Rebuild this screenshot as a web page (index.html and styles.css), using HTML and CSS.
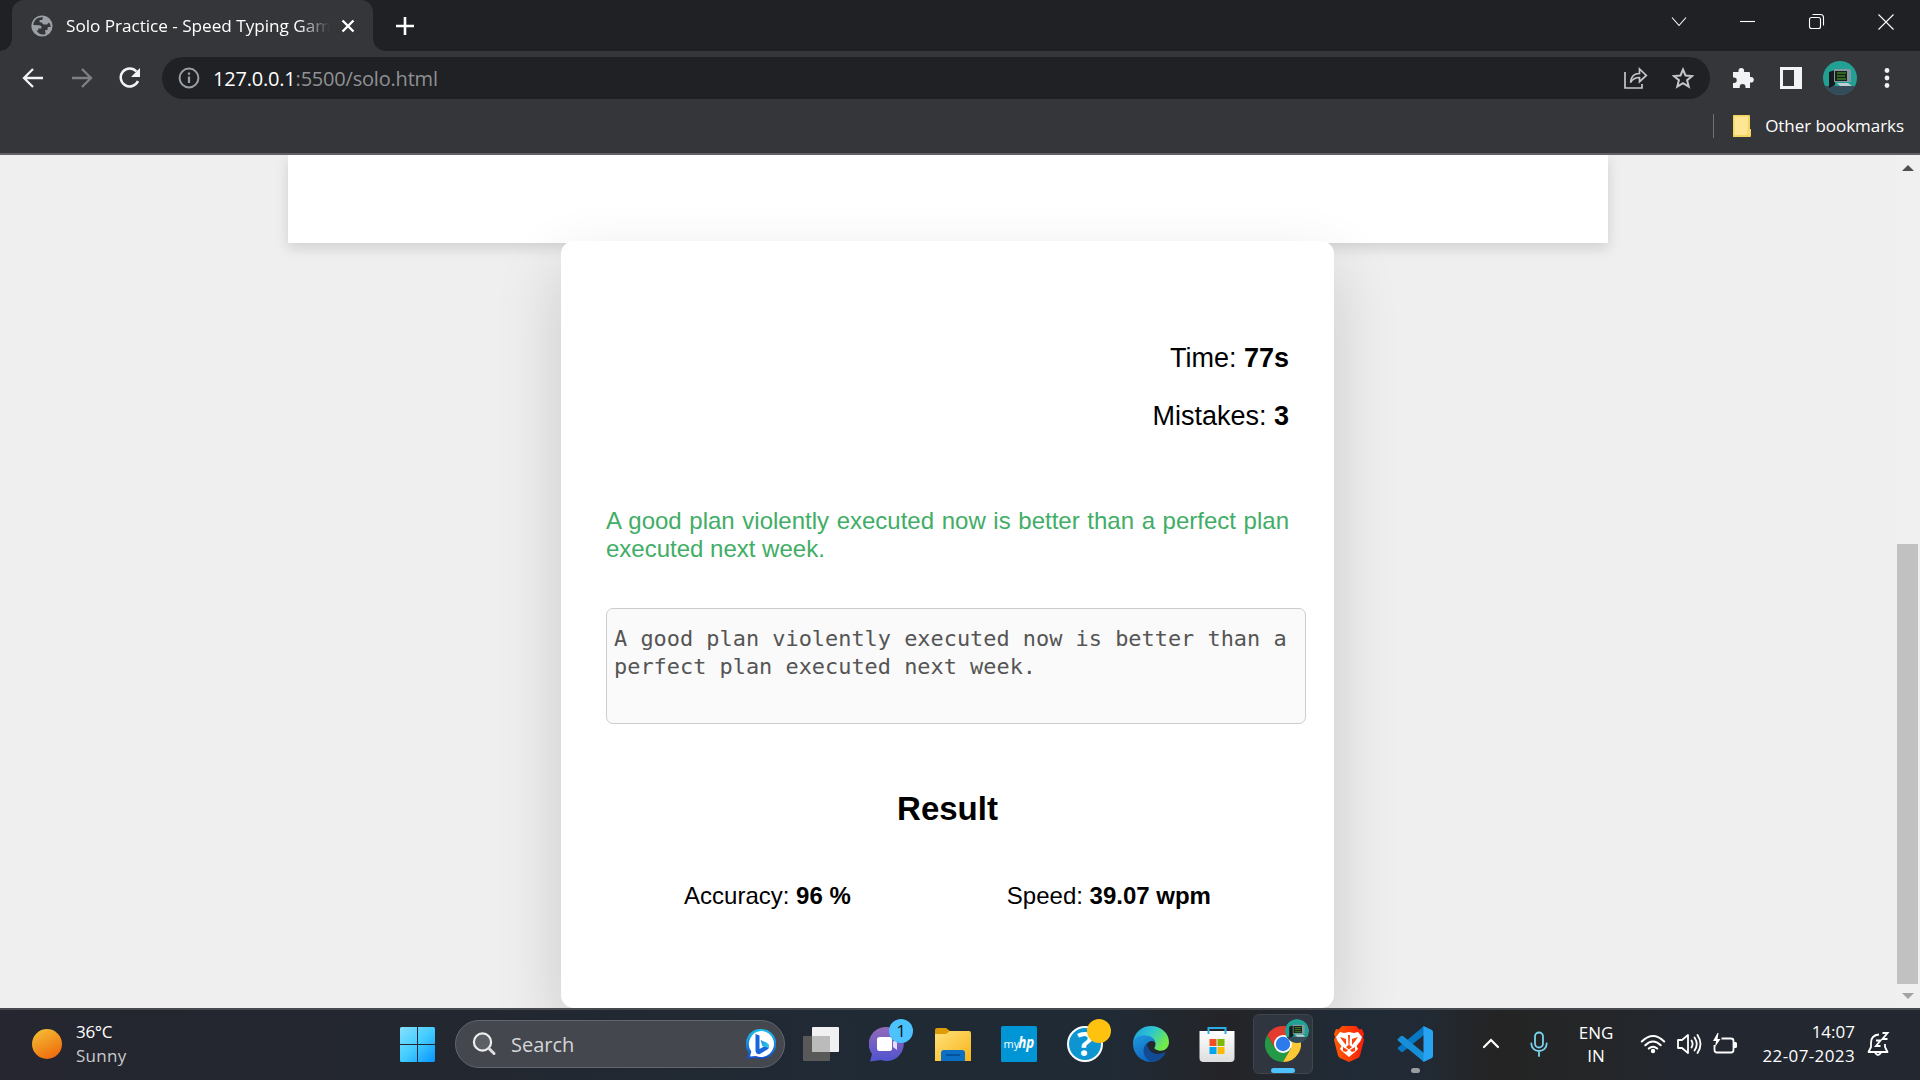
FILE: index.html
```html
<!DOCTYPE html>
<html lang="en">
<head>
<meta charset="utf-8">
<title>Solo Practice - Speed Typing Game</title>
<link rel="stylesheet" href="styles.css">
</head>
<body>
<div class="screen">
  <header class="browser">
    <div class="tabstrip">
      <div class="tab">
        <svg class="globe" width="22" height="22" viewBox="0 0 22 22"><circle cx="11" cy="11" r="10.6" fill="#9aa0a6"/><path d="M12 2.4C6.5 1.8 2.6 5.6 2.3 10l5.4.2c2.5 0 3 1.2 2.8 3.2H7.3v2.2H5.5c2 3.6 6 4.7 9 3.4l-.4-3.9h2.3l.4-3.2h2.9c-.2-1.8-.6-2.7-1.7-4.3l-2 1.9h-3.4L10.500 7.500 8.600 7.200V5.100h2.600z" fill="#35363a"/></svg>
        <span class="tab-title">Solo Practice - Speed Typing Gam</span>
        <svg class="tab-close" width="14" height="14" viewBox="0 0 14 14"><path d="M1.500 1.500l11 11M12.500 1.500l-11 11" stroke="#fff" stroke-width="2.400"/></svg>
      </div>
      <svg class="new-tab" width="18" height="18" viewBox="0 0 18 18"><path d="M9 0v18M0 9h18" stroke="#fff" stroke-width="2.600"/></svg>
      <div class="window-buttons">
        <svg width="18" height="18" viewBox="0 0 18 18"><path d="M2 4.500l7 8 7-8"/></svg>
        <svg width="18" height="18" viewBox="0 0 18 18"><path d="M1 8.500h15"/></svg>
        <svg width="18" height="18" viewBox="0 0 18 18"><rect x="1.500" y="4.500" width="11" height="11" rx="2"/><path d="M4.500 1.500h8q3 0 3 3v8"/></svg>
        <svg width="18" height="18" viewBox="0 0 18 18"><path d="M1.500 1.500l15 15M16.500 1.500l-15 15"/></svg>
      </div>
    </div>
    <div class="toolbar">
      <svg class="back" width="22" height="20" viewBox="0 0 22 20"><path d="M21 10H2M11 1L2 10l9 9" fill="none" stroke="#f1f3f4" stroke-width="2.300"/></svg>
      <svg class="forward" width="22" height="20" viewBox="0 0 22 20"><path d="M1 10h19M11 1l9 9-9 9" fill="none" stroke="#7f8084" stroke-width="2.300"/></svg>
      <svg class="reload" width="22" height="22" viewBox="0 0 22 22"><path d="M17.500 4.500A9 9 0 1 0 19 14" fill="none" stroke="#f1f3f4" stroke-width="2.500"/><path d="M21 1v9h-9z" fill="#f1f3f4"/></svg>
      <div class="address">
        <svg class="info" width="22" height="22" viewBox="0 0 22 22"><circle cx="11" cy="11" r="9.400" fill="none" stroke="#9aa0a6" stroke-width="2"/><path d="M11 9.500v6.500M11 5.600v2.200" stroke="#9aa0a6" stroke-width="2.200"/></svg>
        <span class="url"><span class="host">127.0.0.1</span><span class="path">:5500/solo.html</span></span>
        <svg class="share" width="24" height="22" viewBox="0 0 24 22"><path d="M1 5v16h17v-4M6.500 15.500C7 9 11 6.500 15.500 6.500V2l6.800 6.500-6.800 6.200v-4.200c-4 0-7 1.500-9 5z" fill="none" stroke="#c4c6c9" stroke-width="1.700"/></svg>
        <svg class="star" width="22" height="22" viewBox="0 0 22 22"><path d="M11 2.500l2.500 6 6.600.5-5 4.200 1.600 6.400L11 16.100l-5.700 3.500 1.600-6.400L1.900 9l6.600-.5z" fill="none" stroke="#c4c6c9" stroke-width="2"/></svg>
      </div>
      <svg class="puzzle" width="22" height="22" viewBox="0 0 22 22"><path d="M1 5h5.500V3.700a2.800 2.800 0 0 1 5.600 0V5H17q1 0 1 1v4h1a2.800 2.800 0 0 1 0 5.600h-1V21h-4.500v-1.200a2.900 2.900 0 0 0-5.800 0V21H1v-5h1a2.700 2.700 0 0 0 0-5.500H1z" fill="#f1f3f4"/></svg>
      <svg class="sidepanel" width="22" height="22" viewBox="0 0 22 22"><path d="M0 0h22v22H0zM3 3v16h11V3z" fill="#f1f3f4" fill-rule="evenodd"/></svg>
      <svg class="avatar" width="34" height="34" viewBox="0 0 34 34"><use href="#avatar-art"/></svg>
      <svg class="kebab" width="6" height="20" viewBox="0 0 6 20"><g fill="#f1f3f4"><circle cx="3" cy="2.500" r="2.400"/><circle cx="3" cy="10" r="2.400"/><circle cx="3" cy="17.500" r="2.400"/></g></svg>
    </div>
    <div class="bookmarks">
      <svg width="18" height="22" viewBox="0 0 18 22"><path d="M0 .5q0-.5.500-.5H16q1 0 1 1v13h1v7q0 1-1 1H0z" fill="#f5d45d"/><path d="M1.500 1.500h13.500v12.500l-1.500 6H1.500z" fill="#ffe694"/><path d="M14.500 15h2.500v5.500h-2.500z" fill="#f8dc75"/></svg>
      <span>Other bookmarks</span>
    </div>
  </header>

  <main class="viewport">
    <div class="page">
      <div class="panel"></div>
      <section class="card">
        <div class="metric">Time: <b>77s</b></div>
        <div class="metric">Mistakes: <b>3</b></div>
        <p class="quote">A good plan violently executed now is better than a perfect plan executed next week.</p>
        <div class="entry">A good plan violently executed now is better than a perfect plan executed next week.</div>
        <h3 class="result">Result</h3>
        <div class="stats"><div>Accuracy: <b>96 %</b></div><div>Speed: <b>39.07 wpm</b></div></div>
      </section>
    </div>
    <div class="scrollbar">
      <svg width="12" height="6" viewBox="0 0 12 6"><path d="M0 6l6-6 6 6z" fill="#505050"/></svg>
      <div class="thumb"></div>
      <svg width="12" height="6" viewBox="0 0 12 6"><path d="M0 0l6 6 6-6z" fill="#a3a3a3"/></svg>
    </div>
  </main>

  <footer class="taskbar">
    <div class="weather">
      <svg width="30" height="30" viewBox="0 0 30 30"><defs><linearGradient id="sun" x1=".2" y1="0" x2=".7" y2="1"><stop stop-color="#f4bd35"/><stop offset="1" stop-color="#f06a0c"/></linearGradient></defs><circle cx="15" cy="15" r="15" fill="url(#sun)"/></svg>
      <div class="weather-text"><span class="temp">36°C</span><span class="sky">Sunny</span></div>
    </div>
    <div class="app start"><svg width="35" height="35" viewBox="0 0 35 35"><defs><linearGradient id="win" x1="0" y1="0" x2="1" y2="1"><stop stop-color="#85e0ff"/><stop offset=".5" stop-color="#43ccff"/><stop offset="1" stop-color="#0794ff"/></linearGradient></defs><path d="M1.500 0H17v17H0V1.500Q0 0 1.500 0zM18 0h15.500Q35 0 35 1.500V17H18zM0 18h17v17H1.500Q0 35 0 33.500zM18 18h17v15.500q0 1.500-1.500 1.500H18z" fill="url(#win)"/></svg></div>
    <div class="search">
      <svg width="24" height="24" viewBox="0 0 24 24"><circle cx="10.500" cy="10" r="8.600" fill="#ffffff22" stroke="#eee" stroke-width="2.200"/><path d="M17 16.500l5 5" stroke="#ddd" stroke-width="3" stroke-linecap="round"/></svg>
      <span>Search</span>
      <svg class="bing" width="30" height="30" viewBox="0 0 30 30"><defs><linearGradient id="bi" x1="0" y1="0" x2="0" y2="1"><stop stop-color="#1cc2ee"/><stop offset="1" stop-color="#1549c8"/></linearGradient><linearGradient id="bb" x1="0" y1="0" x2="1" y2=".7"><stop stop-color="#238ce8"/><stop offset="1" stop-color="#25c9e7"/></linearGradient></defs><path d="M15 0a15 15 0 1 1-5 29l-9.500.8L2.700 24A15 15 0 0 1 15 0z" fill="url(#bi)"/><path d="M15 2a13 13 0 1 1-5 25l-6 .5 1.300-5A13 13 0 0 1 15 2z" fill="#fff"/><path d="M9.500 5l4 1.500v13.500l9-5v4.800l-9 5.500q-4 0-4-4z" fill="#1766dc"/><path d="M14.500 11l6 2.600q3 2 2.200 5.300L16.300 17z" fill="url(#bb)"/></svg>
    </div>
    <div class="app"><svg width="36" height="36" viewBox="0 0 36 36"><rect x="9" y="1" width="27" height="25" rx="1" fill="#f1f1f1"/><rect x="0" y="10" width="27" height="25" rx="1" fill="#595959"/><path d="M9 10h18v16H9z" fill="#bbb"/></svg></div>
    <div class="app">
      <svg width="36" height="36" viewBox="0 0 36 36"><defs><linearGradient id="ch" x1="0" y1="0" x2="0" y2="1"><stop stop-color="#9469b9"/><stop offset="1" stop-color="#4f54cf"/></linearGradient></defs><path d="M18 1a17 17 0 1 1-6 33l-11 1.500L3 28A17 17 0 0 1 18 1z" fill="url(#ch)"/><rect x="8" y="11" width="15" height="14" rx="2.500" fill="#fff"/><path d="M24 16l4-4v12l-4-3z" fill="#e6defa"/></svg>
      <span class="badge chat-badge">1</span>
    </div>
    <div class="app"><svg width="36" height="36" viewBox="0 0 36 36"><defs><linearGradient id="fo" x1="0" y1="0" x2="1" y2="1"><stop stop-color="#ffe17c"/><stop offset="1" stop-color="#f8b418"/></linearGradient></defs><path d="M0 4q0-2 2-2h9l4 3v5H0z" fill="#dd9b05"/><path d="M0 8h11l4-3h19q2 0 2 2v28H0z" fill="url(#fo)"/><path d="M6 35v-8q0-3 3-3h18q3 0 3 3v8z" fill="#0b6fc4"/><path d="M11 29h14" stroke="#06498c" stroke-width="1.500"/></svg></div>
    <div class="app"><svg width="36" height="36" viewBox="0 0 36 36"><rect width="36" height="36" rx="1.500" fill="#0096d6"/><text x="2.500" y="21.500" class="my">my</text><text x="17.200" y="22" class="hp" textLength="16" lengthAdjust="spacingAndGlyphs">hp</text></svg></div>
    <div class="app">
      <svg class="help-icon" width="36" height="36" viewBox="0 0 36 36"><circle cx="18" cy="18" r="17" fill="#0d95d2" stroke="#fff" stroke-width="2"/><text x="18" y="30" class="help" text-anchor="middle">?</text></svg>
      <span class="badge help-badge"></span>
    </div>
    <div class="app"><svg width="36" height="36" viewBox="0 0 36 36"><defs><linearGradient id="ea" x1="0" y1="0" x2="1" y2=".5"><stop stop-color="#2097dd"/><stop offset=".5" stop-color="#2cc6d1"/><stop offset="1" stop-color="#72ea48"/></linearGradient><linearGradient id="eb" x1="0" y1="0" x2=".5" y2="1"><stop stop-color="#1e99df"/><stop offset="1" stop-color="#1064bd"/></linearGradient></defs><path d="M0 17C1 6 9 0 18 0c10 0 18 7 18 16 0 8-8 11-14 7-1.500-1 .5-2 .5-5 0-4-4-7-9-7C8 11 3 13 0 17z" fill="url(#ea)"/><path d="M0 18c0-6 7-9.500 13-8.500 6 0 9 4 9 7-3-3-9-1-9 5 0 7 8 11 18 7-3 5-8 7.500-13 7.500C8 36 0 28 0 18z" fill="url(#eb)"/><path d="M14 17c-6 5-4 15 4 19 6 0 11-3 14-8 1-2 0-2-1-1.500-7 3.500-16.500.5-17-9.500z" fill="#124b93"/></svg></div>
    <div class="app"><svg width="36" height="36" viewBox="0 0 36 36"><defs><linearGradient id="st" x1="0" y1="0" x2="0" y2="1"><stop stop-color="#fff"/><stop offset="1" stop-color="#ddd"/></linearGradient></defs><path d="M.5 5h35v27q0 4-4 4h-27q-4 0-4-4z" fill="url(#st)"/><path d="M9.500 8V2h17v6" fill="none" stroke="#2cabe5" stroke-width="2"/><path d="M10.500 13h7v7h-7z" fill="#f25022"/><path d="M18.500 13h7v7h-7z" fill="#7fba00"/><path d="M10.500 21h7v7h-7z" fill="#00a4ef"/><path d="M18.500 21h7v7h-7z" fill="#ffb900"/></svg></div>
    <div class="app active">
      <svg width="36" height="36" viewBox="0 0 36 36"><path d="M2.400 9A18 18 0 0 0 18 36l7.800-13.500-15.600 0z" fill="#249a46"/><path d="M33.600 9A18 18 0 0 1 18 36l7.800-13.500L18 9z" fill="#fcc934"/><path d="M2.400 9L10.200 22.500 18 18V9h15.600A18 18 0 0 0 2.400 9z" fill="#e33b2e"/><circle cx="18" cy="18" r="9" fill="#fff"/><circle cx="18" cy="18" r="7.200" fill="#2d7bea"/></svg>
      <svg class="badge profile-badge" width="24" height="24" viewBox="0 0 34 34"><use href="#avatar-art"/></svg>
      <i class="mark"></i>
    </div>
    <div class="app"><svg width="36" height="36" viewBox="0 0 36 36"><defs><linearGradient id="br"><stop stop-color="#ff5b00"/><stop offset="1" stop-color="#f81f0b"/></linearGradient></defs><path d="M11 0h14l3.500 3.500L31 3l2 5-1 3 1 3-4 15.500q-.5 1.500-2 2.500L18 36l-9-4q-1.500-1-2-2.500L3 14l1-3-1-3 2-5 2.500.5z" fill="url(#br)"/><path d="M18 6l5 1 4-1 4 5-1.500 4-4 5 1.500 3-3 3-6 5-6-5-3-3 1.500-3-4-5L5 11l4-5 4 1z" fill="#fff"/><path d="M9 11l6 2v6l-4-5zM27 11l-6 2v6l4-5zM17 9h2l-.5 10L21 21l-3 2.500L15 21l2.500-2zM12 21l5 3-2 2-3-1zM24 21l-5 3 2 2 3-1z" fill="#fa4308"/></svg></div>
    <div class="app"><svg width="36" height="36" viewBox="0 0 36 36"><path d="M1 13l3-2.800q1-.7 2 0L27 27v9L1 14.500q-.8-.8 0-1.500z" fill="#168fd8"/><path d="M1 23l3 2.800q1 .7 2 0L27 9V0L1 21.500q-.8.800 0 1.500z" fill="#0878c4"/><path d="M1 13l3-2.800q1-.7 2 0L16 18.200l-5.500 4.300L1 14.500q-.8-.8 0-1.500z" fill="#168fd8"/><path d="M26.500 0l8 3.700q1.500.8 1.500 2.300v24q0 1.500-1.500 2.300l-8 3.700z" fill="#27a3f1"/></svg><i class="mark idle"></i></div>

    <div class="tray">
      <div><svg width="18" height="12" viewBox="0 0 18 12"><path d="M2 9l7-7 7 7" fill="none" stroke="#fff" stroke-width="2.200" stroke-linecap="round"/></svg></div>
      <div><svg width="18" height="26" viewBox="0 0 18 26"><g fill="none" stroke="#7cd3ef" stroke-width="1.800" stroke-linecap="round"><rect x="5" y="1.500" width="8" height="15" rx="4"/><path d="M1.300 12.500c0 10 15.400 10 15.400 0M9 20v5"/></g></svg></div>
      <div class="lang"><span>ENG</span><span>IN</span></div>
      <div><svg width="26" height="20" viewBox="0 0 26 20"><g fill="none" stroke="#fff" stroke-width="2" stroke-linecap="round"><path d="M1.800 7.500q11.200-11 22.400 0M5.300 11.200q7.700-7.500 15.400 0M8.800 14.600q4.200-3.800 8.400 0"/></g><circle cx="13" cy="17" r="2.200" fill="#fff"/></svg></div>
      <div><svg width="26" height="22" viewBox="0 0 26 22"><g fill="none" stroke="#fff" stroke-width="1.800" stroke-linejoin="round" stroke-linecap="round"><path d="M2 7h4l6-5v18l-6-5H2zM15.500 7.500q2.200 3.500 0 7M18.500 4.500q4.500 6.500 0 13M21.500 2q6 9 0 18"/></g></svg></div>
      <div><svg width="26" height="22" viewBox="0 0 26 22"><path d="M9.500 5.500H19q2.500 0 2.500 2.500v9q0 2.500-2.500 2.500H5q-2.500 0-2.500-2.500v-5" fill="none" stroke="#fff" stroke-width="1.800"/><path d="M22 9h1.500q1.500 0 1.500 1.500v3q0 1.500-1.500 1.500H22zM5.500 0L1 8h3l-1 6 5.500-8H5.500l1-6z" fill="#fff"/></svg></div>
      <div class="clock"><span>14:07</span><span class="date">22-07-2023</span></div>
      <div><svg width="24" height="26" viewBox="0 0 24 26"><path d="M12 3.500Q4 4 4 12v4l-2.500 5h19L18 16v-3M8 21.500q3 5 6 0" fill="none" stroke="#fff" stroke-width="1.800" stroke-linejoin="round"/><path d="M9 9.500h4.500L9 15h4.500M15.500 2h5l-5 6h5" fill="none" stroke="#fff" stroke-width="1.900"/></svg></div>
    </div>
  </footer>
</div>
<svg class="symbols" width="0" height="0"><defs><g id="avatar-art"><circle cx="17" cy="17" r="17" fill="#22a094"/><path d="M2 25h30A17 17 0 0 1 2 25z" fill="#344c59"/><path d="M6 11l6-2v15l-6 3z" fill="#15191e"/><path d="M11 8h15q2 0 2 2v11H11z" fill="#8398a2"/><path d="M12 10h12v10H12z" fill="#17221b"/><path d="M14 12h9M14 15h8M14 18h9" stroke="#417b25" stroke-width="1.500"/><path d="M14 22h11l4 3H17z" fill="#c2cfd2"/></g></defs></svg>
</body>
</html>
```
FILE: styles.css
```css
* { box-sizing: border-box; }
body { margin: 0; overflow: hidden; background: #efefef; font-family: "Open Sans", "Noto Sans", sans-serif; }
svg { display: block; flex: none; }
.symbols { display: none; }
.screen { width: 1920px; height: 1080px; display: flex; flex-direction: column; overflow: hidden; }

.browser { height: 155px; background: #35363a; border-bottom: 2px solid #606165; flex: none; }
.tabstrip { height: 51px; background: #202124; display: flex; align-items: center; padding-left: 12px; }
.tab { width: 361px; height: 51px; background: #35363a; border-radius: 12px 12px 0 0; display: flex; align-items: center; padding: 0 17px 0 19px; position: relative; }
.tab::before, .tab::after { content: ""; position: absolute; bottom: 0; width: 12px; height: 12px; }
.tab::before { left: -12px; background: radial-gradient(circle at 0 0, transparent 11.5px, #35363a 12px); }
.tab::after { right: -12px; background: radial-gradient(circle at 100% 0, transparent 11.5px, #35363a 12px); }
.tab-title { width: 264px; margin: 0 11px 0 13px; overflow: hidden; white-space: nowrap; font-size: 17.2px; letter-spacing: -.04px; color: #fff; -webkit-mask-image: linear-gradient(90deg, #000 232px, transparent 264px); mask-image: linear-gradient(90deg, #000 232px, transparent 264px); }
.new-tab { margin-left: 23px; }
.window-buttons { margin-left: auto; display: flex; gap: 51px; padding: 0 25px 8px 0; }
.window-buttons svg { fill: none; stroke: #fff; stroke-width: 1.1; }
.toolbar { height: 54px; display: flex; align-items: center; padding-left: 22px; }
.forward { margin-left: 27px; }
.reload { margin-left: 25.5px; }
.address { width: 1548px; height: 42px; margin-left: 21.5px; border-radius: 21px; background: #202124; display: flex; align-items: center; padding: 0 16px 0 16px; }
.url { margin-left: 13px; font-size: 20px; letter-spacing: -.2px; color: #8f9194; flex: 1; }
.host { color: #fff; }
.share { margin-right: 24px; }
.puzzle { margin-left: 22px; }
.sidepanel { margin-left: 26px; }
.avatar { margin-left: 21px; }
.kebab { margin-left: 27px; }
.bookmarks { height: 42px; display: flex; align-items: center; justify-content: flex-end; padding-right: 16px; color: #fff; font-size: 17px; }
.bookmarks::before { content: ""; width: 1px; height: 24px; background: #707175; margin-right: 19px; }
.bookmarks span { margin: 0 0 2px 14px; letter-spacing: -.05px; }

.viewport { height: 853px; display: flex; flex: none; overflow: hidden; background: #efefef; }
.page { width: 1896px; display: flex; flex-direction: column; align-items: center; font-family: "Liberation Sans", Arial, sans-serif; overflow: hidden; }
.panel { width: 1320px; height: 88px; background: #fff; box-shadow: 0 5px 13px rgba(0,0,0,.13); flex: none; }
.card { width: 773px; height: 767px; margin: -2px 1px 0 0; padding: 102px 45px 0; border-radius: 13px; background: #fff; box-shadow: 0 27px 66px rgba(0,0,0,.16); position: relative; flex: none; color: #000; }
.metric { font-size: 27px; line-height: 31px; text-align: right; }
.metric + .metric { margin-top: 27px; }
.quote { margin: 75px 0 0; font-size: 24px; line-height: 28px; text-align: justify; color: #41ad66; }
.entry { width: 700px; height: 116px; margin-top: 45px; border: 1px solid #ccc; border-radius: 7px; background: #fafafa; padding: 16px 7px; font: 21.92px/28px "DejaVu Sans Mono", monospace; color: #555; }
.result { margin: 66px 0 0; font-size: 33px; line-height: 38px; text-align: center; }
.stats { display: flex; justify-content: space-around; margin-top: 54px; font-size: 24px; line-height: 28px; }
.scrollbar { width: 24px; background: #f0f0f0; display: flex; flex-direction: column; align-items: center; padding: 10px 1px 9px 0; }
.thumb { width: 21px; height: 440px; margin: auto 0 9px; background: #c1c1c1; }

.taskbar { height: 72px; flex: none; border-top: 2px solid #46494e; padding-bottom: 2px; display: flex; align-items: center; background: linear-gradient(90deg, #25262f 0, #23272f 22%, #202a35 45%, #202a35 58%, #242427 64%, #202a36 70%, #212a34 74%, #242424 78%, #242628 83%, #232730 88%, #232730 100%); color: #fff; }
.weather { width: 384px; padding-left: 32px; display: flex; align-items: center; gap: 14px; flex: none; }
.weather-text { display: flex; flex-direction: column; font-size: 17px; line-height: 24px; }
.temp { letter-spacing: -.3px; }
.sky { color: #c9cacc; letter-spacing: .3px; }
.app { width: 66px; height: 70px; display: flex; align-items: center; justify-content: center; position: relative; flex: none; }
.search { width: 330px; height: 48px; margin: 0 3px 0 5px; border: 1px solid #62656b; border-radius: 24px; background: #44474e; display: flex; align-items: center; padding: 0 8px 0 16px; font-size: 20px; color: #d5d6d8; flex: none; }
.search span { flex: 1; margin-left: 15px; }
.badge { position: absolute; width: 24px; height: 24px; left: 35px; top: 10px; border-radius: 50%; }
.chat-badge { background: #4cc2ff; color: #111; font-size: 17px; line-height: 24px; text-align: center; }
.help-badge { background: #ffc20e; }
.help-icon { overflow: visible; }
.my { font: 11px "Open Sans", sans-serif; fill: #fff; }
.hp { font: italic bold 16px "Open Sans", sans-serif; fill: #fff; }
.help { font: bold 34px "Open Sans", sans-serif; fill: #fff; }
.active::before { content: ""; position: absolute; inset: 5px 3px; border: 1px solid #3f444d; border-radius: 6px; background: #303640; }
.active > svg { position: relative; }
.active > .profile-badge { position: absolute; }
.mark { position: absolute; width: 24px; height: 5px; bottom: 6px; left: 21px; border-radius: 3px; background: #4cc2ff; }
.idle { width: 9px; left: 29px; background: #999ca0; }
.tray { margin-left: 16px; display: grid; grid-template-columns: 54px 42px 72px 42px 30px 42px 109px 48px; align-items: center; flex: none; }
.tray > div { display: flex; justify-content: center; }
.tray .lang, .tray .clock { flex-direction: column; align-items: center; font-size: 17px; line-height: 23px; }
.tray .clock { align-items: flex-end; line-height: 24px; white-space: nowrap; }
.date { letter-spacing: .38px; }
```
